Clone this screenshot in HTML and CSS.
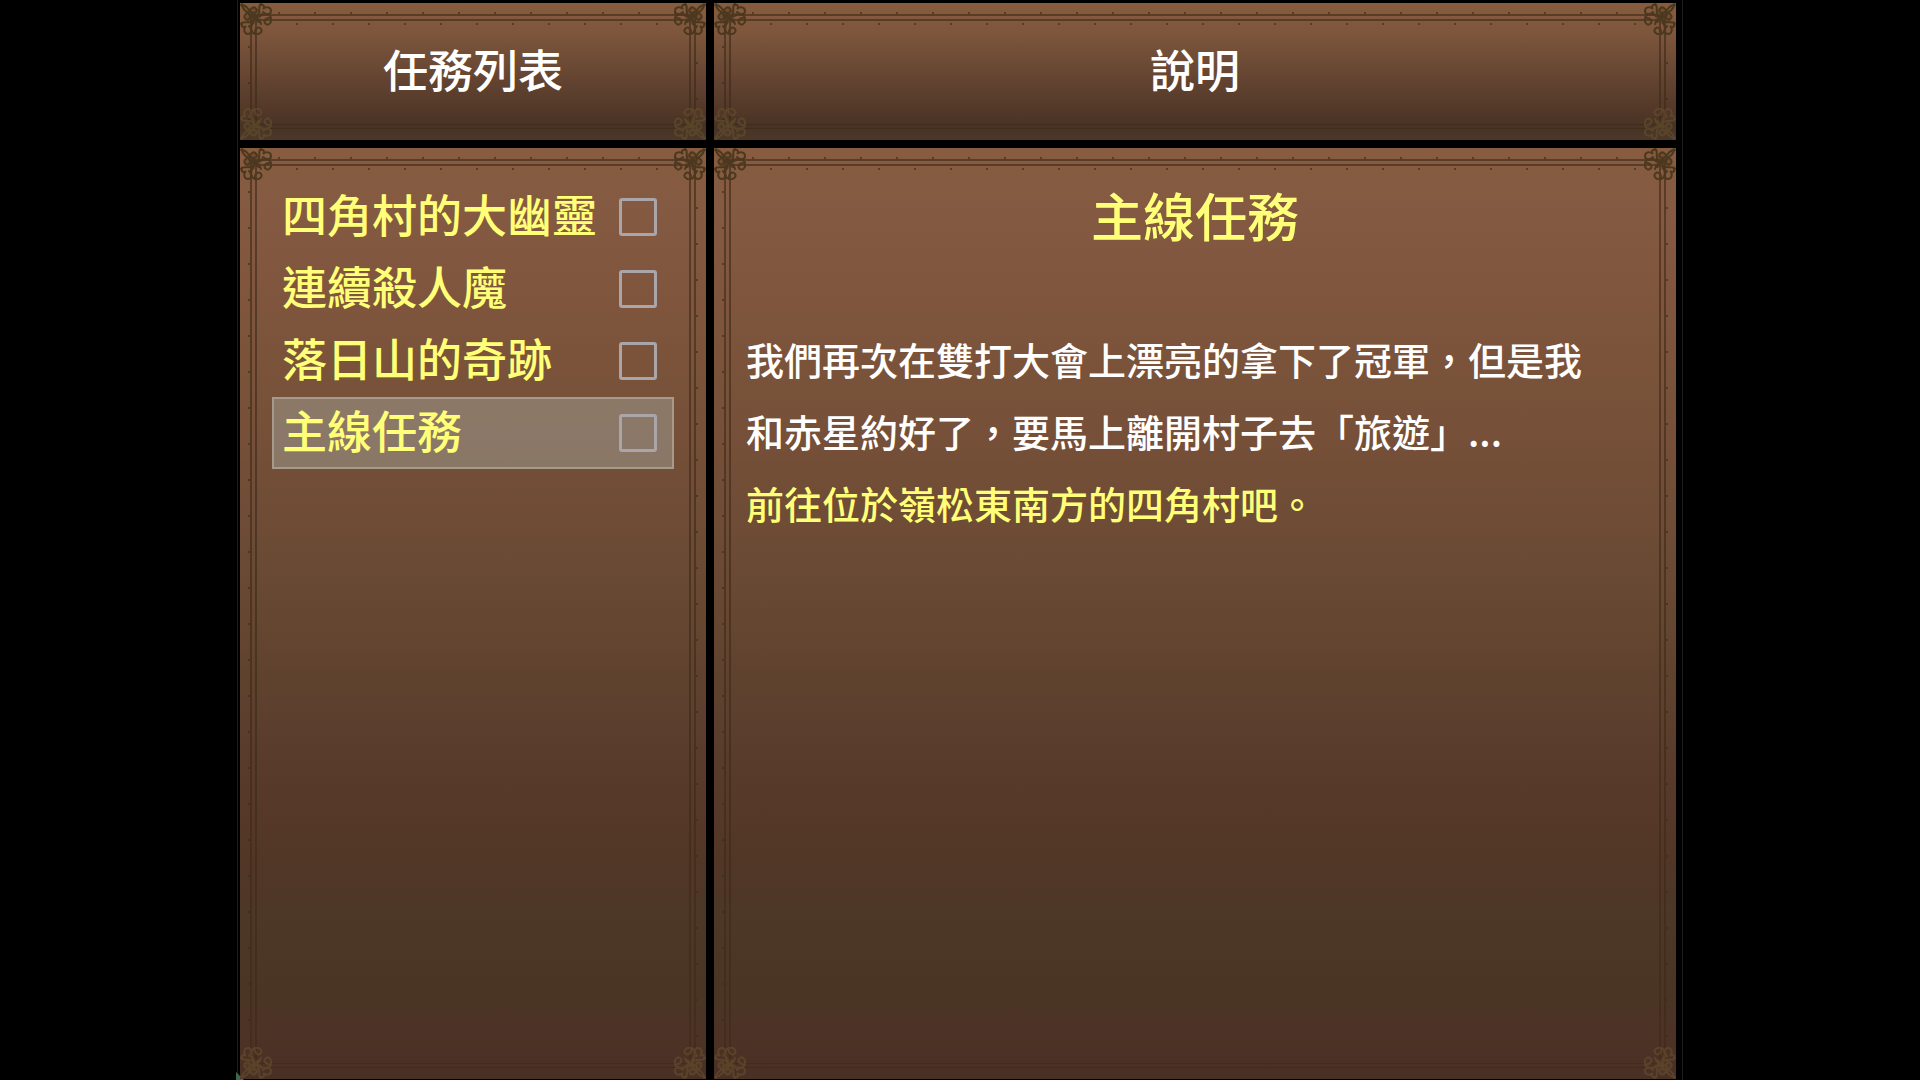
FILE: index.html
```
<!DOCTYPE html>
<html lang="zh-Hant">
<head>
    <meta charset="UTF-8">
    <meta name="viewport" content="width=device-width, initial-scale=1.0">
    <title>任務列表</title>
    <link rel="stylesheet" href="styles.css">
</head>
<body>
    <!-- Corner ornament, reused by every panel -->
    <svg class="defs" width="0" height="0" aria-hidden="true">
        <symbol id="corner" viewBox="0 0 32 32">
            <g fill="none" stroke="currentColor" stroke-width="2" stroke-linecap="round">
                <path d="M1 2c4 0 6 2 8 5s5 4 7 2-1-6-4-4-4 7-1 9 7 0 8-4-1-8 2-9"/>
                <path d="M2 1c0 4 2 6 5 8s4 5 2 7-6-1-4-4 7-4 9-1 0 7-4 8-8-1-9 2"/>
                <path d="M21 2c3-1 4 2 2 4 3-3 8-2 8 2s-5 4-8 1"/>
                <path d="M20 13c4-3 10-2 11 2s-2 8-5 6-1-6 3-6"/>
                <path d="M13 20c-3 4-2 10 2 11s8-2 6-5-6-1-6 3"/>
                <path d="M2 21c-1 3 2 4 4 2-3 3-2 8 2 8s4-5 1-8"/>
                <path d="M15 15c2 0 5 2 6 6M12 12l7 7M18 14l4-3M14 18l-3 4"/>
            </g>
            <circle cx="13" cy="13" r="8" fill="currentColor" opacity=".35"/>
        </symbol>
    </svg>

    <main class="quest-screen">
        <header class="panel panel-title">
            <div class="frame"></div>
            <svg class="corner tl"><use href="#corner"/></svg>
            <svg class="corner tr"><use href="#corner"/></svg>
            <svg class="corner bl"><use href="#corner"/></svg>
            <svg class="corner br"><use href="#corner"/></svg>
            <h1>任務列表</h1>
        </header>

        <header class="panel panel-title">
            <div class="frame"></div>
            <svg class="corner tl"><use href="#corner"/></svg>
            <svg class="corner tr"><use href="#corner"/></svg>
            <svg class="corner bl"><use href="#corner"/></svg>
            <svg class="corner br"><use href="#corner"/></svg>
            <h1>說明</h1>
        </header>

        <nav class="panel panel-body">
            <div class="frame"></div>
            <svg class="corner tl"><use href="#corner"/></svg>
            <svg class="corner tr"><use href="#corner"/></svg>
            <svg class="corner bl"><use href="#corner"/></svg>
            <svg class="corner br"><use href="#corner"/></svg>
            <ul class="quest-list">
                <li class="quest">
                    <label for="quest-1">四角村的大幽靈</label>
                    <input type="checkbox" id="quest-1">
                </li>
                <li class="quest">
                    <label for="quest-2">連續殺人魔</label>
                    <input type="checkbox" id="quest-2">
                </li>
                <li class="quest">
                    <label for="quest-3">落日山的奇跡</label>
                    <input type="checkbox" id="quest-3">
                </li>
                <li class="quest selected">
                    <label for="quest-4">主線任務</label>
                    <input type="checkbox" id="quest-4">
                </li>
            </ul>
        </nav>

        <section class="panel panel-body description">
            <div class="frame"></div>
            <svg class="corner tl"><use href="#corner"/></svg>
            <svg class="corner tr"><use href="#corner"/></svg>
            <svg class="corner bl"><use href="#corner"/></svg>
            <svg class="corner br"><use href="#corner"/></svg>
            <h2>主線任務</h2>
            <p>我們再次在雙打大會上漂亮的拿下了冠軍，但是我<br>和赤星約好了，要馬上離開村子去「旅遊」...</p>
            <p class="objective">前往位於嶺松東南方的四角村吧。</p>
        </section>
    </main>
</body>
</html>
```

FILE: styles.css
```
* {
    margin: 0;
    padding: 0;
    box-sizing: border-box;
}

body {
    font-family: 'Noto Sans CJK TC', 'Noto Sans', sans-serif;
    font-weight: 500;
    background: #000;
    color: #fff;
}

.defs {
    display: block;
}

/* 4:3 game screen, centered */
.quest-screen {
    position: relative;
    display: grid;
    grid-template-columns: 466fr 962fr;
    grid-template-rows: auto 1fr;
    gap: 8px;
    width: min(100vw, 133.333vh);
    min-height: 100vh;
    margin: 0 auto;
    padding: 3px 4px 1px 0;
    outline: 1px solid #1b1c1c;
    outline-offset: 2px;
}

/* Sliver of the map showing behind the screen corner */
.quest-screen::before {
    content: "";
    position: absolute;
    left: -4px;
    bottom: 0;
    width: 8px;
    height: 8px;
    background: #3f6848;
    clip-path: polygon(0 0, 100% 100%, 0 100%);
}

/* Panels */
.panel {
    position: relative;
    --line: rgba(62, 42, 24, 0.62);
}

.panel-title {
    padding: 29px 32px 35px;
    background: linear-gradient(#875c3e 0%, #7d563c 22%, #684733 50%, #513728 80%, #463324 90%, #4b3829 100%);
}

.panel-body {
    padding: 33px 32px;
    background: linear-gradient(#875c3f 0%, #845a42 6%, #7f563d 16%, #754f38 32%, #6a4a34 45%, #5f422e 57%, #593b2c 66%, #523626 76%, #4d3726 82%, #4a3524 91%, #4d3226 95%, #4a3024 100%);
}

/* Double line running around the inside of a panel */
.frame {
    position: absolute;
    inset: 11px 10px;
    border: 2px solid var(--line);
    border-bottom-width: 1px;
    pointer-events: none;
}

.frame::before {
    content: "";
    position: absolute;
    inset: 3px;
    border: 2px solid var(--line);
    border-bottom-width: 1px;
}

/* Small ticks along the lines */
.frame::after {
    content: "";
    position: absolute;
    inset: -4px;
    --tick: var(--line) 0 2px, transparent 2px 36px;
    background:
        repeating-linear-gradient(90deg, var(--tick)) 30px 0 / 100% 2px no-repeat,
        repeating-linear-gradient(90deg, var(--tick)) 48px 11px / 100% 2px no-repeat,
        repeating-linear-gradient(var(--tick)) 0 34px / 2px 100% no-repeat,
        repeating-linear-gradient(var(--tick)) 100% 50px / 2px 100% no-repeat;
}

.corner {
    position: absolute;
    width: 32px;
    height: 32px;
    color: #4c381f;
}

.tl { top: 0; left: 0; }
.tr { top: 0; right: 0; transform: scaleX(-1); }
.bl { bottom: 0; left: 0; transform: scaleY(-1); }
.br { bottom: 0; right: 0; transform: scale(-1); }

.bl, .br {
    color: #66502f;
    opacity: 0.6;
}

/* Text */
h1 {
    font-size: 45px;
    font-weight: 500;
    line-height: 73px;
    text-align: center;
}

h2 {
    margin-bottom: 72px;
    color: #ffff78;
    font-size: 52px;
    font-weight: 500;
    line-height: 72px;
    text-align: center;
}

p {
    font-size: 38px;
    line-height: 72px;
}

.description {
    padding-top: 31px;
}

.objective {
    color: #ffff78;
}

/* Quest list */
.quest-list {
    list-style: none;
}

.quest {
    display: flex;
    align-items: center;
    justify-content: space-between;
    height: 72px;
    padding: 0 17px 0 10px;
    color: #ffff78;
    font-size: 45px;
    line-height: 60px;
}

.quest label {
    padding-bottom: 6px;
}

.quest.selected {
    background: rgba(160, 160, 150, 0.5);
    box-shadow: inset 0 0 0 2px #a59a8b;
}

.quest input {
    appearance: none;
    width: 38px;
    height: 38px;
    border: 3px solid #aaa5a8;
    border-radius: 3px;
}
```
